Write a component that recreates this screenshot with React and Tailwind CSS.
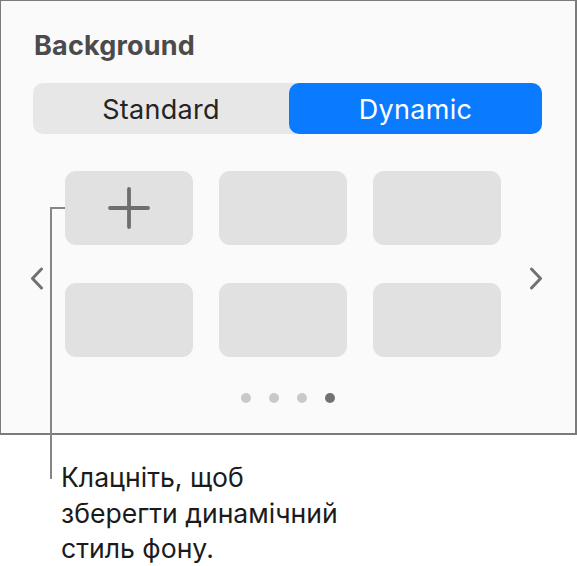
import React from "react";

function Chevron({ dir }) {
  return (
    <svg width="14" height="23" viewBox="0 0 14 23" className="shrink-0">
      <polyline
        points={dir === "left" ? "11.5,2 2.5,11.5 11.5,21" : "2.5,2 11.5,11.5 2.5,21"}
        fill="none"
        stroke="#717171"
        strokeWidth="3"
        strokeLinecap="round"
        strokeLinejoin="round"
      />
    </svg>
  );
}

function Tile({ children }) {
  return (
    <div className="w-[128px] h-[74px] rounded-[11px] bg-[#e1e1e1] flex items-center justify-center">
      {children}
    </div>
  );
}

export default function App() {
  return (
    <div className="relative w-[577px] h-[566px] bg-white overflow-hidden" style={{ fontFamily: "Inter, 'Noto Sans', sans-serif" }}>
      <div className="h-[435px] border border-r-2 border-b-2 border-[#7b7b7b] bg-[#fafafa] pt-[32px] pl-[32px] pr-[33px]">
        <div className="text-[27px] leading-[26px] font-bold text-[#4b4b4b] tracking-[0.2px] pl-[1px]">Background</div>
        <div className="mt-[24px] h-[51px] w-[509px] rounded-[10px] bg-[#e7e7e7] flex">
          <div className="w-[256px] pt-[4px] flex items-center justify-center text-[27px] text-[#242424] tracking-[0.3px]">Standard</div>
          <div className="flex-1 pt-[4px] rounded-[10px] bg-[#0a7aff] flex items-center justify-center text-[27px] text-white tracking-[0.3px]">Dynamic</div>
        </div>
        <div className="mt-[37px] flex items-start -ml-[3px]">
          <div className="mt-[96px] shrink-0"><Chevron dir="left" /></div>
          <div className="ml-[21px] shrink-0 grid grid-cols-[128px_128px_128px] gap-x-[26px] gap-y-[38px]">
            <Tile>
              <svg width="44" height="44" viewBox="0 0 44 44">
                <line x1="3" y1="22" x2="41" y2="22" stroke="#6e6e6e" strokeWidth="3.8" strokeLinecap="round" />
                <line x1="22" y1="3" x2="22" y2="41" stroke="#6e6e6e" strokeWidth="3.8" strokeLinecap="round" />
              </svg>
            </Tile>
            <Tile />
            <Tile />
            <Tile />
            <Tile />
            <Tile />
          </div>
          <div className="ml-[28px] mt-[96px] shrink-0"><Chevron dir="right" /></div>
        </div>
        <div className="mt-[36px] flex justify-center gap-[18px]">
          <span className="w-[10px] h-[10px] rounded-full bg-[#c9c9c9]" />
          <span className="w-[10px] h-[10px] rounded-full bg-[#c9c9c9]" />
          <span className="w-[10px] h-[10px] rounded-full bg-[#c9c9c9]" />
          <span className="w-[10px] h-[10px] rounded-full bg-[#727272]" />
        </div>
      </div>
      <div className="mt-[25px] pl-[61px] text-[26.6px] leading-[35.5px] text-[#1b1b1b]">
        Клацніть, щоб
        <br />
        зберегти динамічний
        <br />
        стиль фону.
      </div>
      <div className="absolute left-[50px] top-[207px] w-[15px] h-[2px] bg-[#868686]" />
      <div className="absolute left-[50px] top-[207px] w-[2px] h-[272px] bg-[#868686]" />
    </div>
  );
}
